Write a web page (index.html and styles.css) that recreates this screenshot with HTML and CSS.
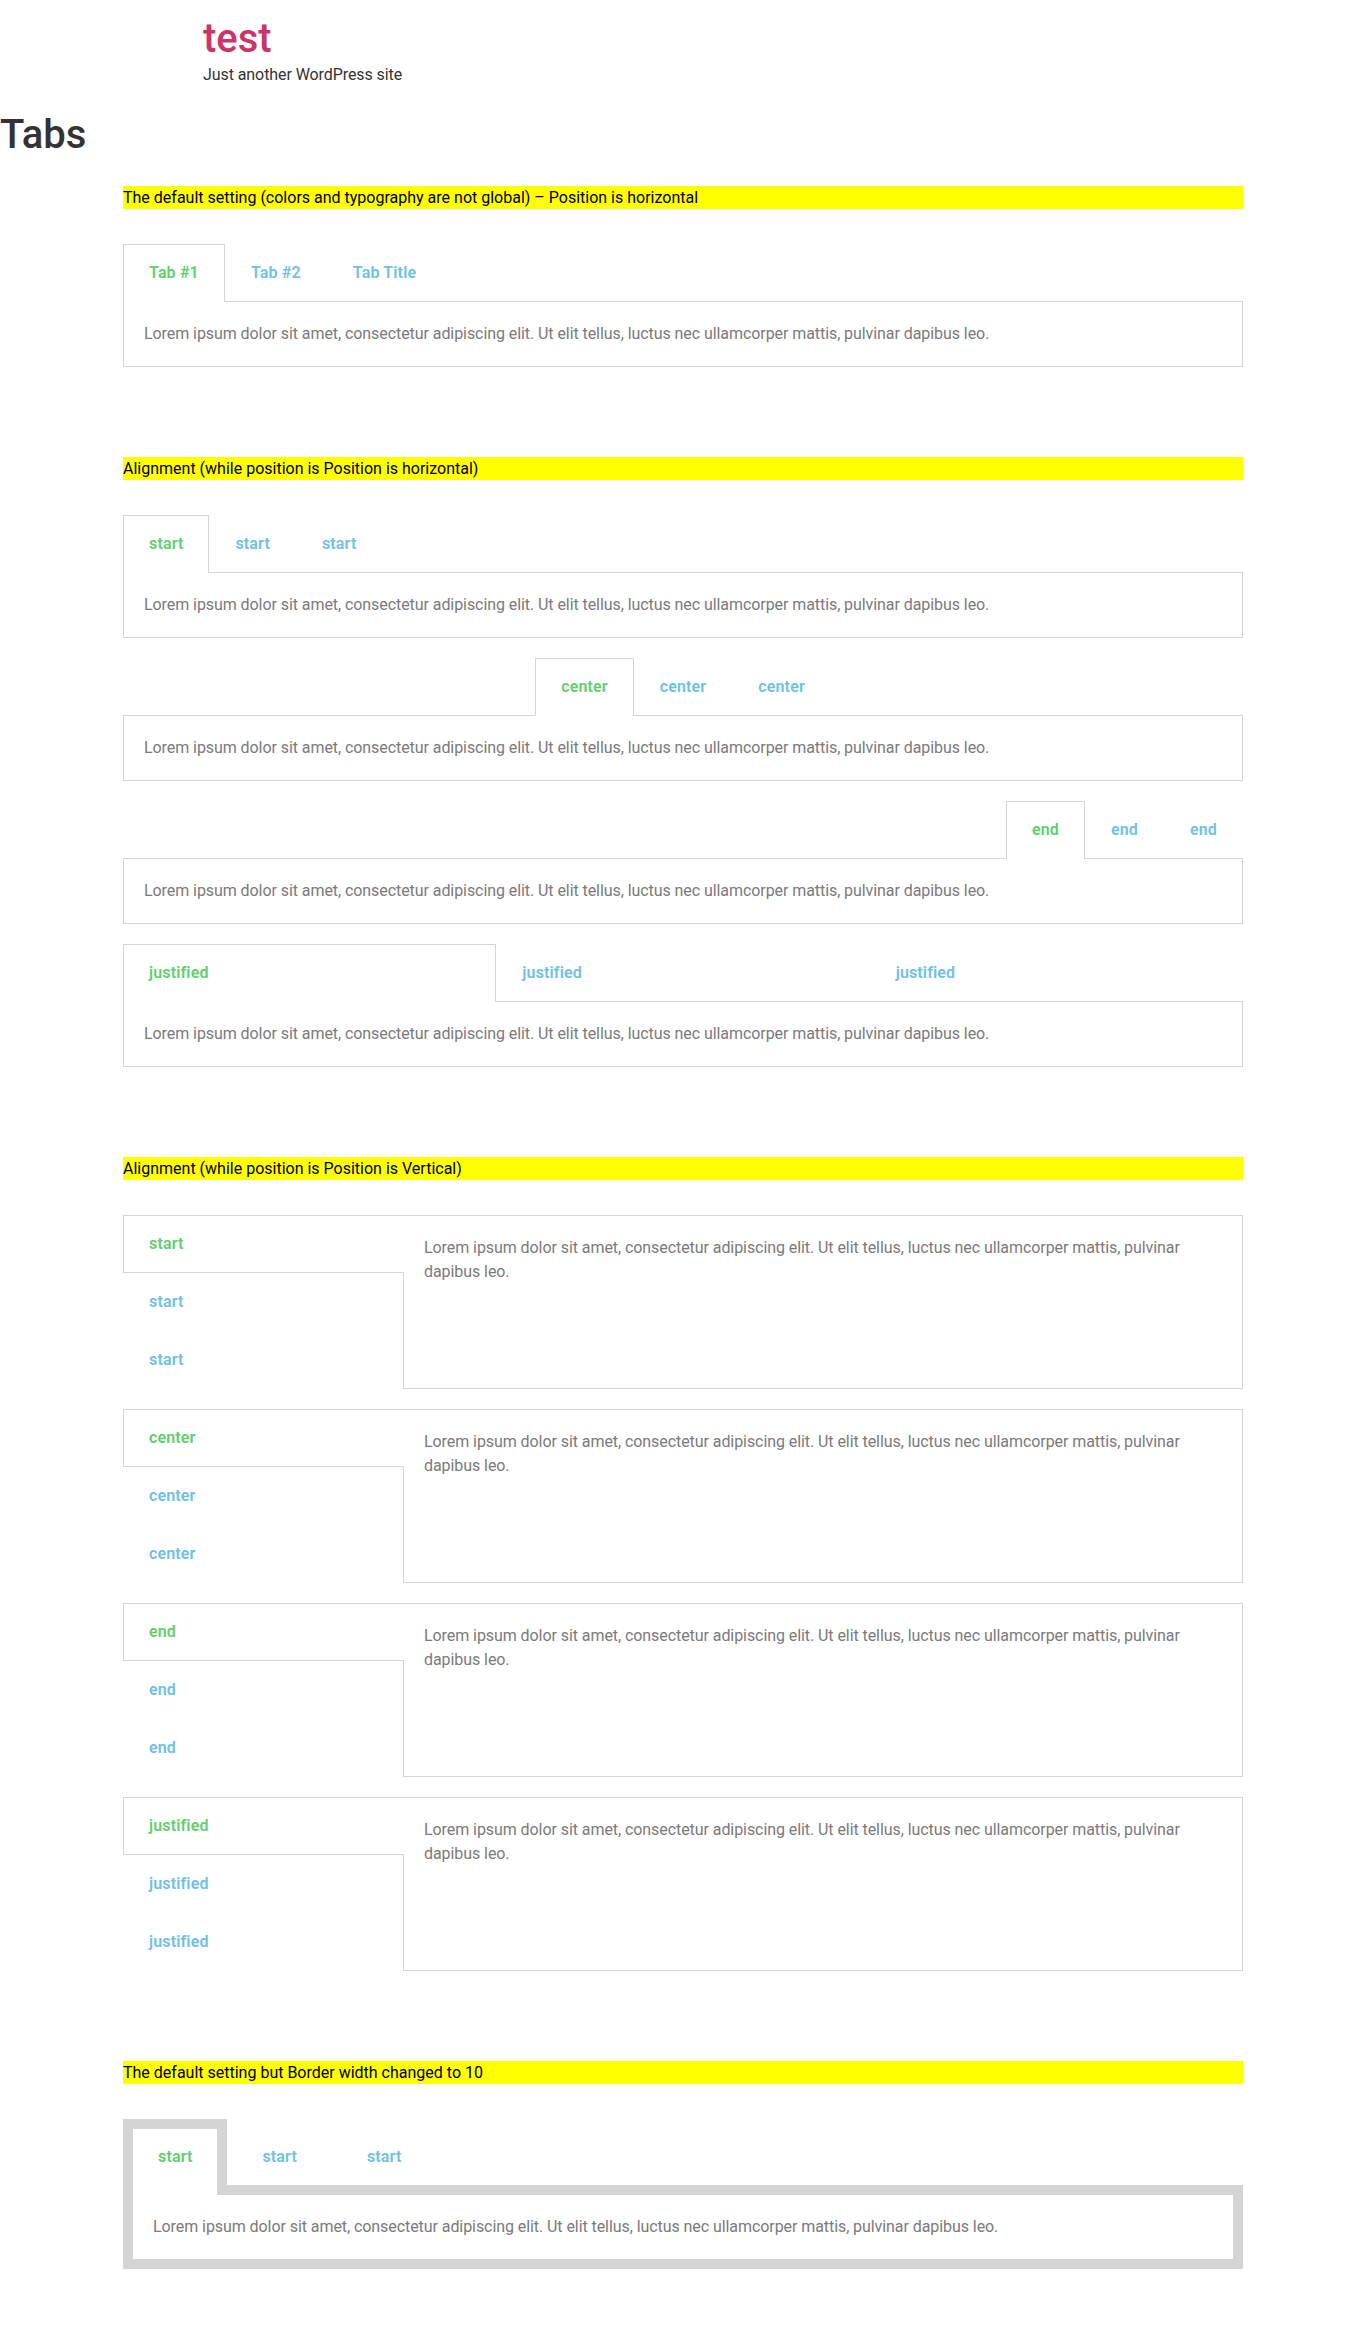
FILE: index.html
```html
<!DOCTYPE html>
<html lang="en">
<head>
<meta charset="utf-8">
<title>Tabs – test</title>
<link rel="stylesheet" href="styles.css">
</head>
<body>
<header class="site-header">
  <h1 class="site-title">test</h1>
  <p class="site-description">Just another WordPress site</p>
</header>
<h1 class="page-title">Tabs</h1>
<main class="content">

  <section class="section">
    <p class="note">The default setting (colors and typography are not global) – Position is horizontal</p>
    <div class="tabs">
      <div class="tabs-nav">
        <div class="tab active">Tab #1</div>
        <div class="tab">Tab #2</div>
        <div class="tab">Tab Title</div>
      </div>
      <div class="tab-content">Lorem ipsum dolor sit amet, consectetur adipiscing elit. Ut elit tellus, luctus nec ullamcorper mattis, pulvinar dapibus leo.</div>
    </div>
  </section>

  <section class="section">
    <p class="note">Alignment (while position is Position is horizontal)</p>
    <div class="tabs">
      <div class="tabs-nav">
        <div class="tab active">start</div>
        <div class="tab">start</div>
        <div class="tab">start</div>
      </div>
      <div class="tab-content">Lorem ipsum dolor sit amet, consectetur adipiscing elit. Ut elit tellus, luctus nec ullamcorper mattis, pulvinar dapibus leo.</div>
    </div>
    <div class="tabs">
      <div class="tabs-nav nav-center">
        <div class="tab active">center</div>
        <div class="tab">center</div>
        <div class="tab">center</div>
      </div>
      <div class="tab-content">Lorem ipsum dolor sit amet, consectetur adipiscing elit. Ut elit tellus, luctus nec ullamcorper mattis, pulvinar dapibus leo.</div>
    </div>
    <div class="tabs">
      <div class="tabs-nav nav-end">
        <div class="tab active">end</div>
        <div class="tab">end</div>
        <div class="tab">end</div>
      </div>
      <div class="tab-content">Lorem ipsum dolor sit amet, consectetur adipiscing elit. Ut elit tellus, luctus nec ullamcorper mattis, pulvinar dapibus leo.</div>
    </div>
    <div class="tabs">
      <div class="tabs-nav nav-justified">
        <div class="tab active">justified</div>
        <div class="tab">justified</div>
        <div class="tab">justified</div>
      </div>
      <div class="tab-content">Lorem ipsum dolor sit amet, consectetur adipiscing elit. Ut elit tellus, luctus nec ullamcorper mattis, pulvinar dapibus leo.</div>
    </div>
  </section>

  <section class="section">
    <p class="note">Alignment (while position is Position is Vertical)</p>
    <div class="tabs vertical">
      <div class="tabs-nav">
        <div class="tab active">start</div>
        <div class="tab">start</div>
        <div class="tab">start</div>
      </div>
      <div class="tab-content">Lorem ipsum dolor sit amet, consectetur adipiscing elit. Ut elit tellus, luctus nec ullamcorper mattis, pulvinar dapibus leo.</div>
    </div>
    <div class="tabs vertical">
      <div class="tabs-nav">
        <div class="tab active">center</div>
        <div class="tab">center</div>
        <div class="tab">center</div>
      </div>
      <div class="tab-content">Lorem ipsum dolor sit amet, consectetur adipiscing elit. Ut elit tellus, luctus nec ullamcorper mattis, pulvinar dapibus leo.</div>
    </div>
    <div class="tabs vertical">
      <div class="tabs-nav">
        <div class="tab active">end</div>
        <div class="tab">end</div>
        <div class="tab">end</div>
      </div>
      <div class="tab-content">Lorem ipsum dolor sit amet, consectetur adipiscing elit. Ut elit tellus, luctus nec ullamcorper mattis, pulvinar dapibus leo.</div>
    </div>
    <div class="tabs vertical">
      <div class="tabs-nav">
        <div class="tab active">justified</div>
        <div class="tab">justified</div>
        <div class="tab">justified</div>
      </div>
      <div class="tab-content">Lorem ipsum dolor sit amet, consectetur adipiscing elit. Ut elit tellus, luctus nec ullamcorper mattis, pulvinar dapibus leo.</div>
    </div>
  </section>

  <section class="section">
    <p class="note">The default setting but Border width changed to 10</p>
    <div class="tabs thick">
      <div class="tabs-nav">
        <div class="tab active">start</div>
        <div class="tab">start</div>
        <div class="tab">start</div>
      </div>
      <div class="tab-content">Lorem ipsum dolor sit amet, consectetur adipiscing elit. Ut elit tellus, luctus nec ullamcorper mattis, pulvinar dapibus leo.</div>
    </div>
  </section>

</main>
</body>
</html>
```
FILE: styles.css
```css
* {
  box-sizing: border-box;
}

html,
body {
  background: #fff;
}

body {
  margin: 0;
  font-family: Roboto, "Liberation Sans", sans-serif;
  color: #333;
  min-height: 2351px;
}

.site-header {
  max-width: 960px;
  margin: 0 auto;
  padding-top: 15px;
}

.site-title {
  margin: 0;
  font-size: 40px;
  line-height: 48px;
  font-weight: 500;
  color: #c36;
}

.site-description {
  margin: 0;
  font-size: 16px;
  line-height: 24px;
  letter-spacing: -0.08px;
  color: #333;
}

.page-title {
  margin: 24px 0 0;
  font-size: 40px;
  line-height: 48px;
  font-weight: 500;
  color: #333;
}

.content {
  width: 1120px;
  margin: 27px auto 0;
}

.section + .section {
  margin-top: 90px;
}

.note {
  margin: 0 0 35px;
  height: 23px;
  line-height: 23px;
  font-size: 16px;
  color: #000;
  background: #ff0;
}

.tabs {
  --bw: 1px;
  margin-bottom: 20px;
}

.tabs:last-child {
  margin-bottom: 0;
}

.tabs-nav {
  display: flex;
  align-items: flex-start;
}

.nav-center {
  justify-content: center;
}

.nav-end {
  justify-content: flex-end;
}

.nav-justified .tab {
  flex: 1 1 0;
}

.tab {
  padding: 20px 25px;
  border: var(--bw) solid transparent;
  border-bottom: 0;
  font-size: 16px;
  line-height: 16px;
  font-weight: 600;
  letter-spacing: 0.15px;
  color: #6ec1e4;
  white-space: nowrap;
}

.tab.active {
  position: relative;
  z-index: 1;
  color: #61ce70;
  background: #fff;
  border-color: #d4d4d4;
  padding-bottom: calc(20px + var(--bw));
  margin-bottom: calc(-1 * var(--bw));
}

.tab-content {
  border: var(--bw) solid #d4d4d4;
  padding: 20px;
  font-size: 16px;
  line-height: 24px;
  letter-spacing: -0.07px;
  color: #7a7a7a;
  background: #fff;
}

.thick {
  --bw: 10px;
}

/* vertical layout */
.vertical {
  display: flex;
  align-items: stretch;
}

.vertical .tabs-nav {
  flex-direction: column;
  align-items: stretch;
  width: 25%;
  flex-shrink: 0;
}

.vertical .tab {
  border: 1px solid transparent;
  border-right: 0;
}

.vertical .tab.active {
  border-color: #d4d4d4;
  padding-bottom: 20px;
  margin-bottom: 0;
  margin-right: -1px;
}

.vertical .tab-content {
  flex: 1 1 auto;
}
```
